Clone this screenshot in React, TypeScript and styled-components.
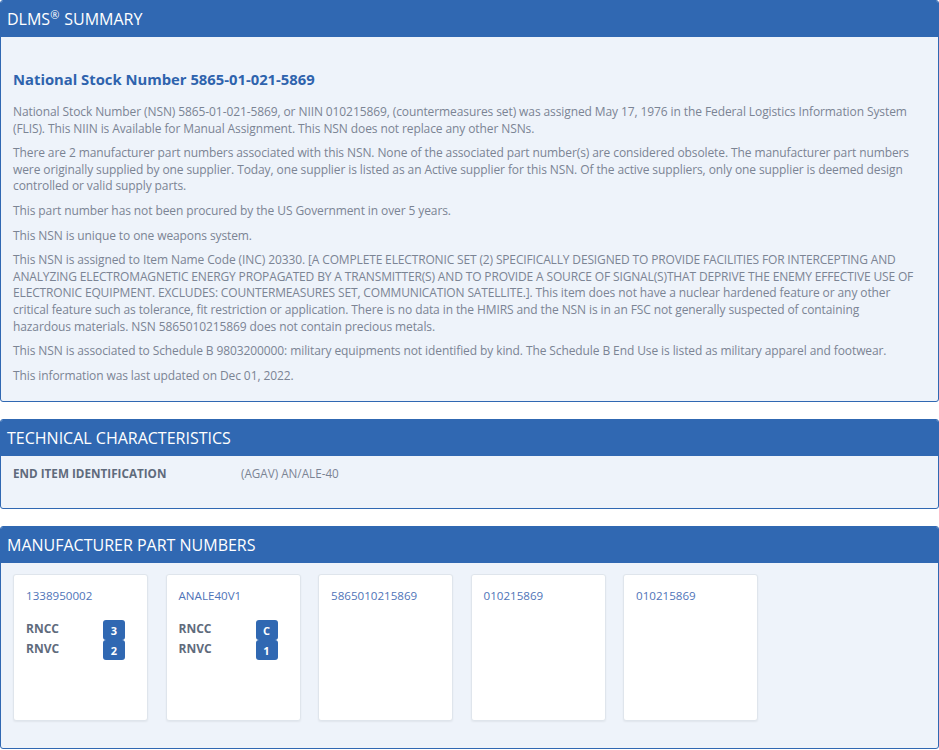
import React from 'react'
import styled, { createGlobalStyle } from 'styled-components'

const GlobalStyle = createGlobalStyle`
  html, body {
    margin: 0;
    padding: 0;
    background: #fff;
  }
  body {
    font-family: 'Open Sans', 'Liberation Sans', sans-serif;
  }
`

const BLUE = '#3068b2'

const Page = styled.div`
  display: flex;
  flex-direction: column;
  gap: 17px;
  width: 939px;
`

const Panel = styled.section`
  border: 1px solid ${BLUE};
  border-radius: 3px;
  background: #eef3fa;
  overflow: hidden;
`

const PanelHeader = styled.h2`
  margin: 0;
  height: 36px;
  padding: 0 6px;
  display: flex;
  align-items: center;
  background: ${BLUE};
  color: #fff;
  font-size: 16px;
  font-weight: 400;
  text-transform: uppercase;

  sup {
    font-size: 11px;
    align-self: flex-start;
    margin-top: 6px;
    margin-right: 5px;
  }
`

const PanelBody = styled.div<{ $pad: string }>`
  padding: ${(p) => p.$pad};
`

const Title = styled.h1`
  margin: 32px 0 15px;
  color: #2e63ad;
  font-size: 14.8px;
  font-weight: 700;
  line-height: 20px;
`

const Para = styled.p`
  margin: 0 0 8px;
  color: #7b8494;
  font-size: 12px;
  letter-spacing: -0.1px;
  line-height: 16.6px;
`

// the item name definition is all caps and sets a touch tighter
const Definition = styled.span`
  letter-spacing: -0.15px;
`

const SpecRow = styled.div`
  display: grid;
  grid-template-columns: 228px 1fr;
  font-size: 11.7px;
  line-height: 17px;
`

const SpecLabel = styled.span`
  color: #5f6b7c;
  font-weight: 700;
  text-transform: uppercase;
`

const SpecValue = styled.span`
  color: #7b8494;
`

const CardRow = styled.div`
  display: flex;
  gap: 17.5px;
`

const Card = styled.div`
  width: 135px;
  height: 147px;
  box-sizing: border-box;
  padding: 12px 12px;
  background: #fff;
  border: 1px solid #dfe5ec;
  border-radius: 3px;
  box-shadow: 0 1px 2px rgba(0, 0, 0, 0.06);
`

const PartNo = styled.div`
  color: #4f74b8;
  font-size: 11.6px;
  line-height: 17px;
  margin-bottom: 16px;
`

const CodeGrid = styled.div`
  display: grid;
  grid-template-columns: 77px 22px;
`

const CodeLabel = styled.span`
  color: #5f6b7c;
  font-size: 12px;
  font-weight: 700;
  line-height: 18px;
`

const Badge = styled.span`
  display: flex;
  align-items: center;
  justify-content: center;
  height: 20px;
  background: ${BLUE};
  color: #fff;
  font-size: 11px;
  font-weight: 700;
  border-radius: 3px;
`

interface Part {
  number: string
  rncc?: string
  rnvc?: string
}

const parts: Part[] = [
  { number: '1338950002', rncc: '3', rnvc: '2' },
  { number: 'ANALE40V1', rncc: 'C', rnvc: '1' },
  { number: '5865010215869' },
  { number: '010215869' },
  { number: '010215869' },
]

export default function App() {
  return (
    <>
      <GlobalStyle />
      <Page>
        <Panel>
          <PanelHeader>
            DLMS<sup>®</sup>Summary
          </PanelHeader>
          <PanelBody $pad="0 19px 9px 12px">
            <Title>National Stock Number 5865-01-021-5869</Title>
            <Para>
              National Stock Number (NSN) 5865-01-021-5869, or NIIN 010215869, (countermeasures set) was
              assigned May 17, 1976 in the Federal Logistics Information System (FLIS). This NIIN is
              Available for Manual Assignment. This NSN does not replace any other NSNs.
            </Para>
            <Para>
              There are 2 manufacturer part numbers associated with this NSN. None of the associated part
              number(s) are considered obsolete. The manufacturer part numbers were originally supplied by
              one supplier. Today, one supplier is listed as an Active supplier for this NSN. Of the active
              suppliers, only one supplier is deemed design controlled or valid supply parts.
            </Para>
            <Para>This part number has not been procured by the US Government in over 5 years.</Para>
            <Para>This NSN is unique to one weapons system.</Para>
            <Para>
              This NSN is assigned to Item Name Code (INC) 20330.{' '}
              <Definition>
                [A COMPLETE ELECTRONIC SET (2) SPECIFICALLY DESIGNED TO PROVIDE FACILITIES FOR INTERCEPTING
                AND ANALYZING ELECTROMAGNETIC ENERGY PROPAGATED BY A TRANSMITTER(S) AND TO PROVIDE A SOURCE
                OF SIGNAL(S)THAT DEPRIVE THE ENEMY EFFECTIVE USE OF ELECTRONIC EQUIPMENT. EXCLUDES:
                COUNTERMEASURES SET, COMMUNICATION SATELLITE.]
              </Definition>
              . This item does not have a nuclear hardened feature or any other critical feature such as
              tolerance, fit restriction or application. There is no data in the HMIRS and the NSN is in an
              FSC not generally suspected of containing hazardous materials. NSN 5865010215869 does not
              contain precious metals.
            </Para>
            <Para>
              This NSN is associated to Schedule B 9803200000: military equipments not identified by kind.
              The Schedule B End Use is listed as military apparel and footwear.
            </Para>
            <Para>This information was last updated on Dec 01, 2022.</Para>
          </PanelBody>
        </Panel>

        <Panel>
          <PanelHeader>Technical Characteristics</PanelHeader>
          <PanelBody $pad="9px 12px 26px">
            <SpecRow>
              <SpecLabel>End Item Identification</SpecLabel>
              <SpecValue>(AGAV) AN/ALE-40</SpecValue>
            </SpecRow>
          </PanelBody>
        </Panel>

        <Panel>
          <PanelHeader>Manufacturer Part Numbers</PanelHeader>
          <PanelBody $pad="11px 12px 27px">
            <CardRow>
              {parts.map((p, i) => (
                <Card key={i}>
                  <PartNo>{p.number}</PartNo>
                  {p.rncc && (
                    <CodeGrid>
                      <CodeLabel>RNCC</CodeLabel>
                      <Badge>{p.rncc}</Badge>
                      <CodeLabel>RNVC</CodeLabel>
                      <Badge>{p.rnvc}</Badge>
                    </CodeGrid>
                  )}
                </Card>
              ))}
            </CardRow>
          </PanelBody>
        </Panel>
      </Page>
    </>
  )
}
